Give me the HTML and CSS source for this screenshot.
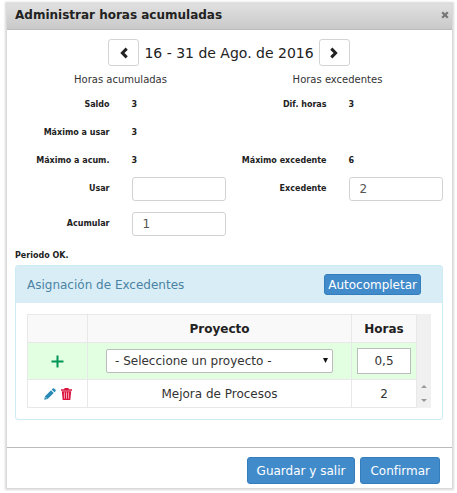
FILE: index.html
```html
<!DOCTYPE html>
<html lang="es">
<head>
<meta charset="utf-8">
<meta name="viewport" content="width=device-width, initial-scale=1">
<title>Administrar horas acumuladas</title>
<link rel="stylesheet" href="styles.css">
</head>
<body>
<main class="dialog">
  <header class="dialog-header">
    <h1>Administrar horas acumuladas</h1>
    <button class="close" type="button" aria-label="Cerrar">
      <svg width="8" height="8" viewBox="0 0 8 8"><path d="M1.2 1.2 6.8 6.8M6.8 1.2 1.2 6.8" stroke="#777" stroke-width="2.3"/></svg>
    </button>
  </header>
  <form class="dialog-body">
    <div class="period">
      <button class="nav" type="button" aria-label="Anterior">
        <svg width="10" height="12" viewBox="0 0 10 12"><path d="M7.7 1.6 3.4 6l4.3 4.4" fill="none" stroke="#222" stroke-width="3"/></svg>
      </button>
      <span>16 - 31 de Ago. de 2016</span>
      <button class="nav" type="button" aria-label="Siguiente">
        <svg width="10" height="12" viewBox="0 0 10 12"><path d="M2.3 1.6 6.6 6l-4.3 4.4" fill="none" stroke="#222" stroke-width="3"/></svg>
      </button>
    </div>
    <div class="groups">
      <section class="group">
        <h2>Horas acumuladas</h2>
        <div class="field"><span>Saldo</span><b>3</b></div>
        <div class="field"><span>Máximo a usar</span><b>3</b></div>
        <div class="field"><span>Máximo a acum.</span><b>3</b></div>
        <div class="field"><label for="usar">Usar</label><input id="usar" type="text"></div>
        <div class="field entry"><label for="acumular">Acumular</label><input id="acumular" type="text" value="1"></div>
      </section>
      <section class="group">
        <h2>Horas excedentes</h2>
        <div class="field"><span>Dif. horas</span><b>3</b></div>
        <div class="field"></div>
        <div class="field"><span>Máximo excedente</span><b>6</b></div>
        <div class="field"><label for="excedente">Excedente</label><input id="excedente" type="text" value="2"></div>
      </section>
    </div>
    <p class="status">Periodo OK.</p>
    <section class="panel">
      <div class="panel-header">
        <h2>Asignación de Excedentes</h2>
        <button class="primary small" type="button">Autocompletar</button>
      </div>
      <div class="panel-body">
        <table>
          <colgroup><col class="col-actions"><col><col class="col-hours"><col class="col-scroll"></colgroup>
          <thead>
            <tr><th></th><th>Proyecto</th><th>Horas</th><td class="gutter"></td></tr>
          </thead>
          <tbody>
            <tr class="new-row">
              <td>
                <button class="icon" type="button" aria-label="Agregar">
                  <svg width="13" height="13" viewBox="0 0 13 13"><path d="M6.5 0.5v12M0.5 6.5h12" stroke="#009455" stroke-width="2"/></svg>
                </button>
              </td>
              <td>
                <div class="select">
                  <select aria-label="Proyecto"><option>- Seleccione un proyecto -</option></select>
                  <svg class="caret" width="5" height="5" viewBox="0 0 5 5"><path d="M0 0h5L2.5 5z" fill="#111"/></svg>
                </div>
              </td>
              <td><input class="hours" type="text" value="0,5" aria-label="Horas"></td>
              <td class="gutter"></td>
            </tr>
            <tr>
              <td>
                <div class="actions">
                  <button class="icon" type="button" aria-label="Editar">
                    <svg width="12" height="12" viewBox="0 0 12 12"><path d="M0.2 11.8 1 8.3 7 2.3l2.7 2.7-6 6zM7.7 1.6 8.8.5q.7-.6 1.4 0l1.3 1.3q.6.7 0 1.4l-1.1 1.1z" fill="#288bb5"/><path d="m1.5 9.2 1.3 1.3" stroke="#fff" stroke-width=".7"/></svg>
                  </button>
                  <button class="icon" type="button" aria-label="Eliminar">
                    <svg width="11" height="12" viewBox="0 0 11 12"><path d="M0 1.3h3.4V0h4.2v1.3H11v1.5H0zM.8 3.2h9.4L9.3 12H1.7z" fill="#dc123d"/><path d="M3.4 4.3v6.4M5.5 4.3v6.4M7.6 4.3v6.4" stroke="#fff" stroke-width=".8" opacity=".8"/></svg>
                  </button>
                </div>
              </td>
              <td>Mejora de Procesos</td>
              <td>2</td>
              <td class="gutter">
                <svg width="6" height="17" viewBox="0 0 6 17"><path d="M0 3h6L3 0zM0 14h6l-3 3z" fill="#999"/></svg>
              </td>
            </tr>
          </tbody>
        </table>
      </div>
    </section>
  </form>
  <footer class="dialog-footer">
    <button class="primary" type="button">Guardar y salir</button>
    <button class="primary" type="button">Confirmar</button>
  </footer>
</main>
</body>
</html>
```
FILE: styles.css
```css
* { box-sizing: border-box; }
body {
  margin: 0;
  padding: 4px 5px 4px 7px;
  background: #fff;
  color: #333;
  font: 12px/16px "DejaVu Sans", Verdana, sans-serif;
}
h1, h2, p { margin: 0; }
button, input, select { font: inherit; color: inherit; margin: 0; }
button { padding: 0; cursor: pointer; }
svg { display: block; }

.dialog { background: #fff; box-shadow: 0 0 2px 2px #d8d8d8; }
.dialog-header {
  display: flex;
  align-items: center;
  justify-content: space-between;
  height: 26px;
  padding: 0 3px 3px 8px;
  background: linear-gradient(#e0e0e0, #c9c9c9);
  border-bottom: 1px solid #bbb;
}
.dialog-header h1 { font-size: 12px; line-height: 16px; color: #222; }
.close { border: 0; background: none; }

.dialog-body { padding: 9px 9px 27px 8px; }
.period {
  display: flex;
  align-items: center;
  justify-content: center;
  gap: 5px;
  color: #222;
  font-size: 14px;
}
.nav {
  display: grid;
  place-items: center;
  width: 31px;
  height: 27px;
  background: #fff;
  border: 1px solid #d4d4d4;
  border-radius: 3px;
}
.groups { display: flex; gap: 6px; margin-top: 6px; }
.group { flex: 1; }
.group h2 {
  margin-bottom: 3px;
  font-size: 10px;
  font-weight: normal;
  line-height: 16px;
  text-align: center;
}
.field {
  display: grid;
  grid-template-columns: 1fr 1fr;
  column-gap: 22px;
  align-items: center;
  min-height: 28px;
  color: #222;
  font-size: 8px;
  font-weight: bold;
}
.field span, .field label { text-align: right; white-space: nowrap; justify-self: end; }
.entry { margin-top: 7px; }
.field input {
  width: 100%;
  height: 24px;
  padding: 0 10px;
  border: 1px solid #d2d2d2;
  border-radius: 3px;
  color: #555;
  font-size: 12px;
  font-weight: normal;
}
.status {
  margin: 10px 0 1px;
  color: #222;
  font-size: 8px;
  font-weight: bold;
}
.panel { border: 1px solid #ccecf3; border-radius: 3px; }
.panel-header {
  display: flex;
  align-items: center;
  justify-content: space-between;
  height: 37px;
  padding: 0 21px 0 11px;
  background: #d9edf7;
}
.panel-header h2 { color: #4a83a3; font-size: 12px; font-weight: normal; }
.primary {
  height: 27px;
  padding: 0 9px;
  border: 1px solid #357ebd;
  border-radius: 3px;
  background: #428bca;
  color: #fff;
  white-space: nowrap;
}
.small { height: 21px; padding: 0 3px; }
.panel-body { padding: 11px; }

table { width: 100%; table-layout: fixed; border-collapse: collapse; }
.col-actions { width: 60px; }
.col-hours { width: 65px; }
.col-scroll { width: 14px; }
th, td {
  height: 28px;
  padding: 0;
  border: 1px solid #e8e8e8;
  text-align: center;
}
th { background: #f9f9f9; color: #222; }
.new-row td { height: 37px; background: #e2ffe2; }
td.gutter, .new-row td.gutter { background: #f0f0f0; border-color: #f0f0f0; }
.gutter svg, .icon svg { margin: 0 auto; }
.icon { border: 0; background: none; vertical-align: middle; }
.actions { display: flex; justify-content: center; gap: 5px; }
.select { position: relative; margin: 0 18px; }
select {
  display: block;
  appearance: none;
  width: 100%;
  height: 24px;
  padding: 0 18px 0 8px;
  border: 1px solid #bbb;
  border-radius: 2px;
  background: #fff;
}
.caret { position: absolute; top: 9px; right: 5px; pointer-events: none; }
.hours {
  display: block;
  width: 54px;
  height: 26px;
  margin: 0 auto;
  padding: 0;
  border: 1px solid #bbb;
  text-align: center;
}
.dialog-footer {
  display: flex;
  justify-content: flex-end;
  gap: 5px;
  padding: 9px 12px 4px;
  border-top: 1px solid #bbb;
}
```
